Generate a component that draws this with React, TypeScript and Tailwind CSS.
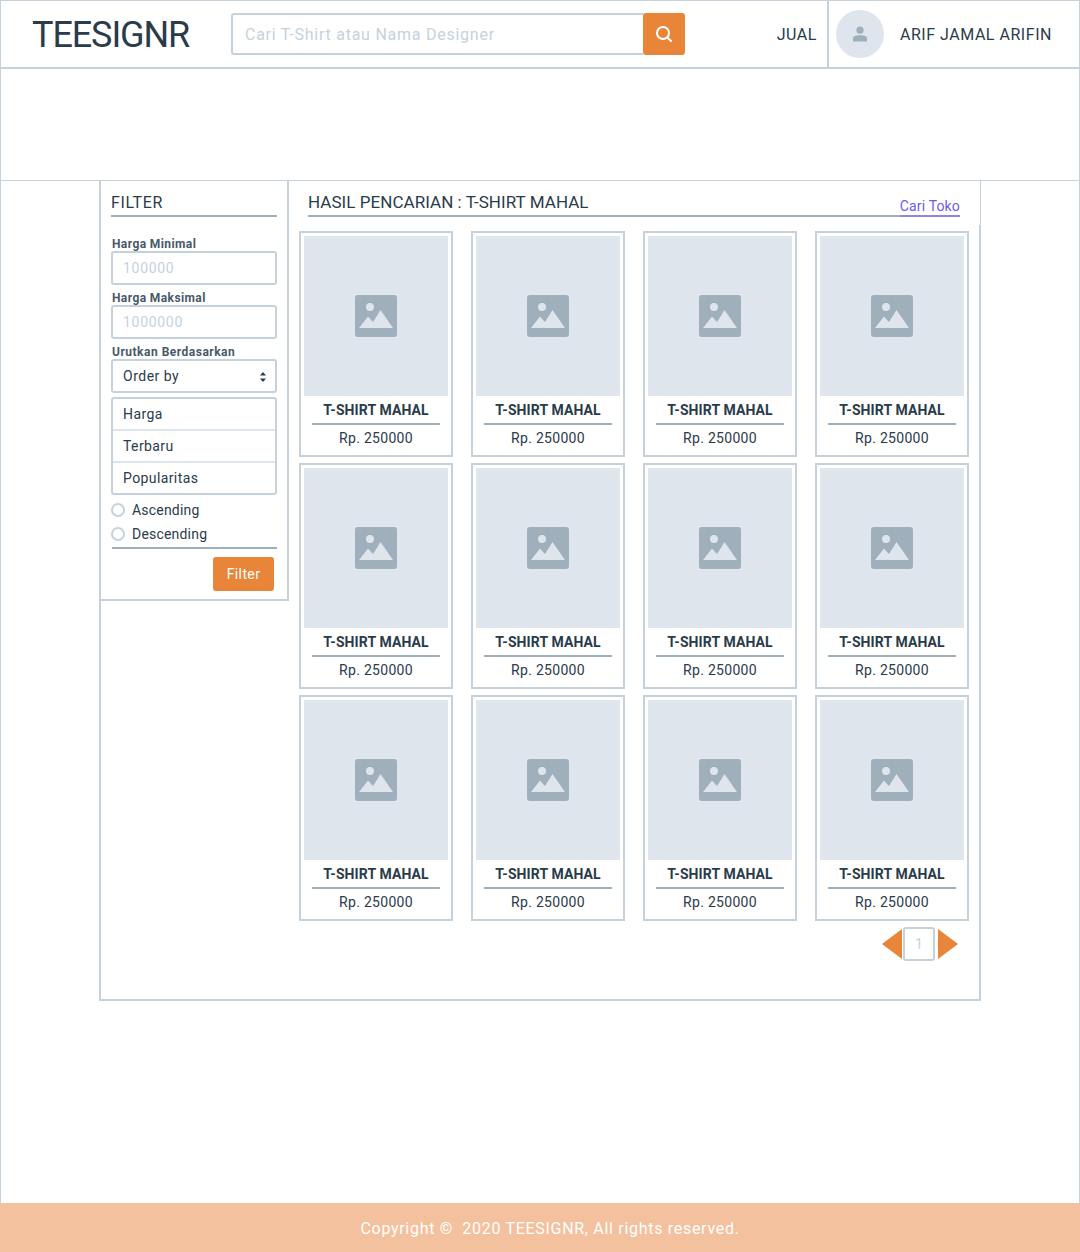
import React from 'react';

const products = Array.from({ length: 12 }, () => ({ name: 'T-SHIRT MAHAL', price: 'Rp. 250000' }));

const ImageIcon = () => (
  <svg width="42" height="42" viewBox="0 0 42 42">
    <rect width="42" height="42" rx="3" fill="#9fafbc" />
    <circle cx="15" cy="12" r="4" fill="#dfe5ec" />
    <path d="M4 33 L13 21.5 L18 27 L25.5 15 L38 33 Z" fill="#dfe5ec" />
  </svg>
);

const Field = ({ label, value }: { label: string; value: string }) => (
  <div className="h-[54px]">
    <div className="h-[15px] pl-px text-[12px] leading-[17px] font-bold tracking-[0.4px] text-[#48596a]">{label}</div>
    <div className="flex h-[34px] items-center rounded-[3px] border-2 border-[#c5d2dd] pt-px pl-[10px] text-[14px] tracking-[0.7px] text-[#c5d2dd]">
      {value}
    </div>
  </div>
);

const Radio = ({ label }: { label: string }) => (
  <div className="flex h-[24px] items-center gap-[7px] text-[14px] tracking-[0.2px] text-[#2a3b4a]">
    <span className="h-[14px] w-[14px] rounded-full border-2 border-[#c5d2dd]" />
    {label}
  </div>
);

const ProductCard = ({ name, price }: { name: string; price: string }) => (
  <div className="h-[226px] border-2 border-[#c5d2dd] p-[3px]">
    <div className="flex h-[160px] items-center justify-center bg-[#dfe5ec]">
      <ImageIcon />
    </div>
    <div className="mx-[8px] h-[29px] border-b-2 border-[#9fafbc] text-center text-[14px] leading-[28px] font-bold tracking-[0.1px] text-[#2a3b4a]">
      {name}
    </div>
    <div className="text-center text-[14px] leading-[26px] tracking-[0.3px] text-[#2a3b4a]">{price}</div>
  </div>
);

export default function App() {
  return (
    <div className="flex h-[1252px] flex-col border-x border-t border-[#c5d2dd] font-['Roboto',sans-serif]">
      <header className="flex h-[68px] shrink-0 items-center border-b-2 border-[#c5d2dd]">
        <div className="w-[230px] pt-[2px] pl-[31px] text-[36px] tracking-[-1.1px] text-[#2a3b4a]">TEESIGNR</div>
        <div className="flex h-[42px] w-[454px] items-stretch">
          <div className="flex flex-1 items-center rounded-l-[3px] border-2 border-r-0 border-[#c5d2dd] pt-[2px] pl-[12px] text-[16px] tracking-[0.75px] text-[#c5d2dd]">
            Cari T-Shirt atau Nama Designer
          </div>
          <div className="flex w-[42px] items-center justify-center rounded-[3px] bg-[#e98538]">
            <svg width="18" height="18" viewBox="0 0 18 18" fill="none" stroke="#fff" strokeWidth="2" strokeLinecap="round">
              <circle cx="8" cy="8" r="6" />
              <path d="M12.5 12.5 L16 16" />
            </svg>
          </div>
        </div>
        <div className="flex-1 pt-[2px] pr-[10px] text-right text-[16px] tracking-[0.55px] text-[#2a3b4a]">JUAL</div>
        <div className="flex h-full w-[252px] items-center border-l-2 border-[#c5d2dd] pl-[7px]">
          <div className="flex h-[48px] w-[48px] items-center justify-center rounded-full bg-[#dfe5ec]">
            <svg width="16" height="16" viewBox="0 0 16 16" fill="#9fafbc">
              <circle cx="8" cy="4.2" r="3.6" />
              <path d="M1 15.5 V12.5 C1 10.5 3.5 9.3 8 9.3 C12.5 9.3 15 10.5 15 12.5 V15.5 Z" />
            </svg>
          </div>
          <div className="ml-[16px] pt-[2px] text-[16px] tracking-[0.53px] text-[#2a3b4a]">ARIF JAMAL ARIFIN</div>
        </div>
      </header>

      <div className="h-[112px] shrink-0 border-b border-[#c5d2dd]" />

      <main className="flex-1 pl-[98px]">
        <div className="flex h-[820px] w-[882px] items-start border-b-2 border-l-2 border-[#c5d2dd]">
          <aside className="h-[420px] w-[188px] shrink-0 border-r-2 border-b-2 border-[#c5d2dd] pr-[10px] pl-[10px]">
            <div className="mt-[11px] h-[25px] border-b-2 border-[#9fafbc] text-[16px] leading-[22px] tracking-[0.65px] text-[#2a3b4a]">FILTER</div>
            <div className="mt-[19px]">
              <Field label="Harga Minimal" value="100000" />
              <Field label="Harga Maksimal" value="1000000" />
              <div className="h-[15px] pl-px text-[12px] leading-[17px] font-bold tracking-[0.5px] text-[#48596a]">Urutkan Berdasarkan</div>
              <div className="flex h-[34px] items-center justify-between rounded-[3px] border-2 border-[#c5d2dd] pt-px pr-[9px] pl-[10px] text-[14px] tracking-[0.5px] text-[#2a3b4a]">
                Order by
                <svg width="6" height="10" viewBox="0 0 6 10" fill="#2a3b4a">
                  <path d="M3 0 L6 3.6 H0 Z M3 10 L0 6.4 H6 Z" />
                </svg>
              </div>
              <div className="mt-[4px] h-[98px] rounded-[3px] border-2 border-[#c5d2dd] text-[14px] tracking-[0.4px] text-[#2a3b4a]">
                <div className="flex h-[32px] items-center border-b-2 border-[#dfe5ec] pl-[10px]">Harga</div>
                <div className="flex h-[32px] items-center border-b-2 border-[#dfe5ec] pl-[10px]">Terbaru</div>
                <div className="flex h-[30px] items-center pl-[10px]">Popularitas</div>
              </div>
            </div>
            <div className="mt-[3px] mb-px">
              <Radio label="Ascending" />
              <Radio label="Descending" />
            </div>
            <div className="ml-px h-[2px] bg-[#9fafbc]" />
            <div className="mt-[8px] flex justify-end pr-[3px]">
              <div className="flex h-[34px] w-[61px] items-center justify-center rounded-[3px] bg-[#e98538] text-[14px] tracking-[0.4px] text-white">Filter</div>
            </div>
          </aside>

          <section className="h-full w-[692px] shrink-0">
            <div className="h-[44px] border-r border-[#c5d2dd] pr-[20px] pl-[19px]">
              <div className="flex h-[36px] items-end justify-between border-b-2 border-[#9fafbc]">
                <div className="pb-[2px] text-[17px] leading-[22px] tracking-[0.05px] text-[#2a3b4a]">HASIL PENCARIAN : T-SHIRT MAHAL</div>
                <div className="mb-[-2px] border-b-2 border-[#8f85e8] text-[14px] leading-[18px] tracking-[0.15px] text-[#6c5ce7]">Cari Toko</div>
              </div>
            </div>
            <div className="h-[774px] border-r-2 border-[#c5d2dd] pt-[6px] pl-[10px]">
              <div className="grid w-[670px] grid-cols-[154px_154px_154px_154px] gap-x-[18px] gap-y-[6px]">
                {products.map((p, i) => (
                  <ProductCard key={i} name={p.name} price={p.price} />
                ))}
              </div>
              <div className="mt-[6px] flex items-center justify-end pr-[21px]">
                <svg width="20" height="30" viewBox="0 0 20 30" fill="#e98538">
                  <path d="M20 0 V30 L0 15 Z" />
                </svg>
                <div className="mr-[3px] ml-px flex h-[34px] w-[32px] items-center justify-center rounded-[3px] border-2 border-[#c5d2dd] text-[14px] text-[#c5d2dd]">1</div>
                <svg width="20" height="30" viewBox="0 0 20 30" fill="#e98538">
                  <path d="M0 0 V30 L20 15 Z" />
                </svg>
              </div>
            </div>
          </section>
        </div>
      </main>

      <footer className="-mx-px flex h-[49px] shrink-0 items-center justify-center bg-[#f3c19e] pt-[2px] pl-[20px] text-[16px] tracking-[0.7px] text-white">
        Copyright ©&nbsp; 2020 TEESIGNR, All rights reserved.
      </footer>
    </div>
  );
}
